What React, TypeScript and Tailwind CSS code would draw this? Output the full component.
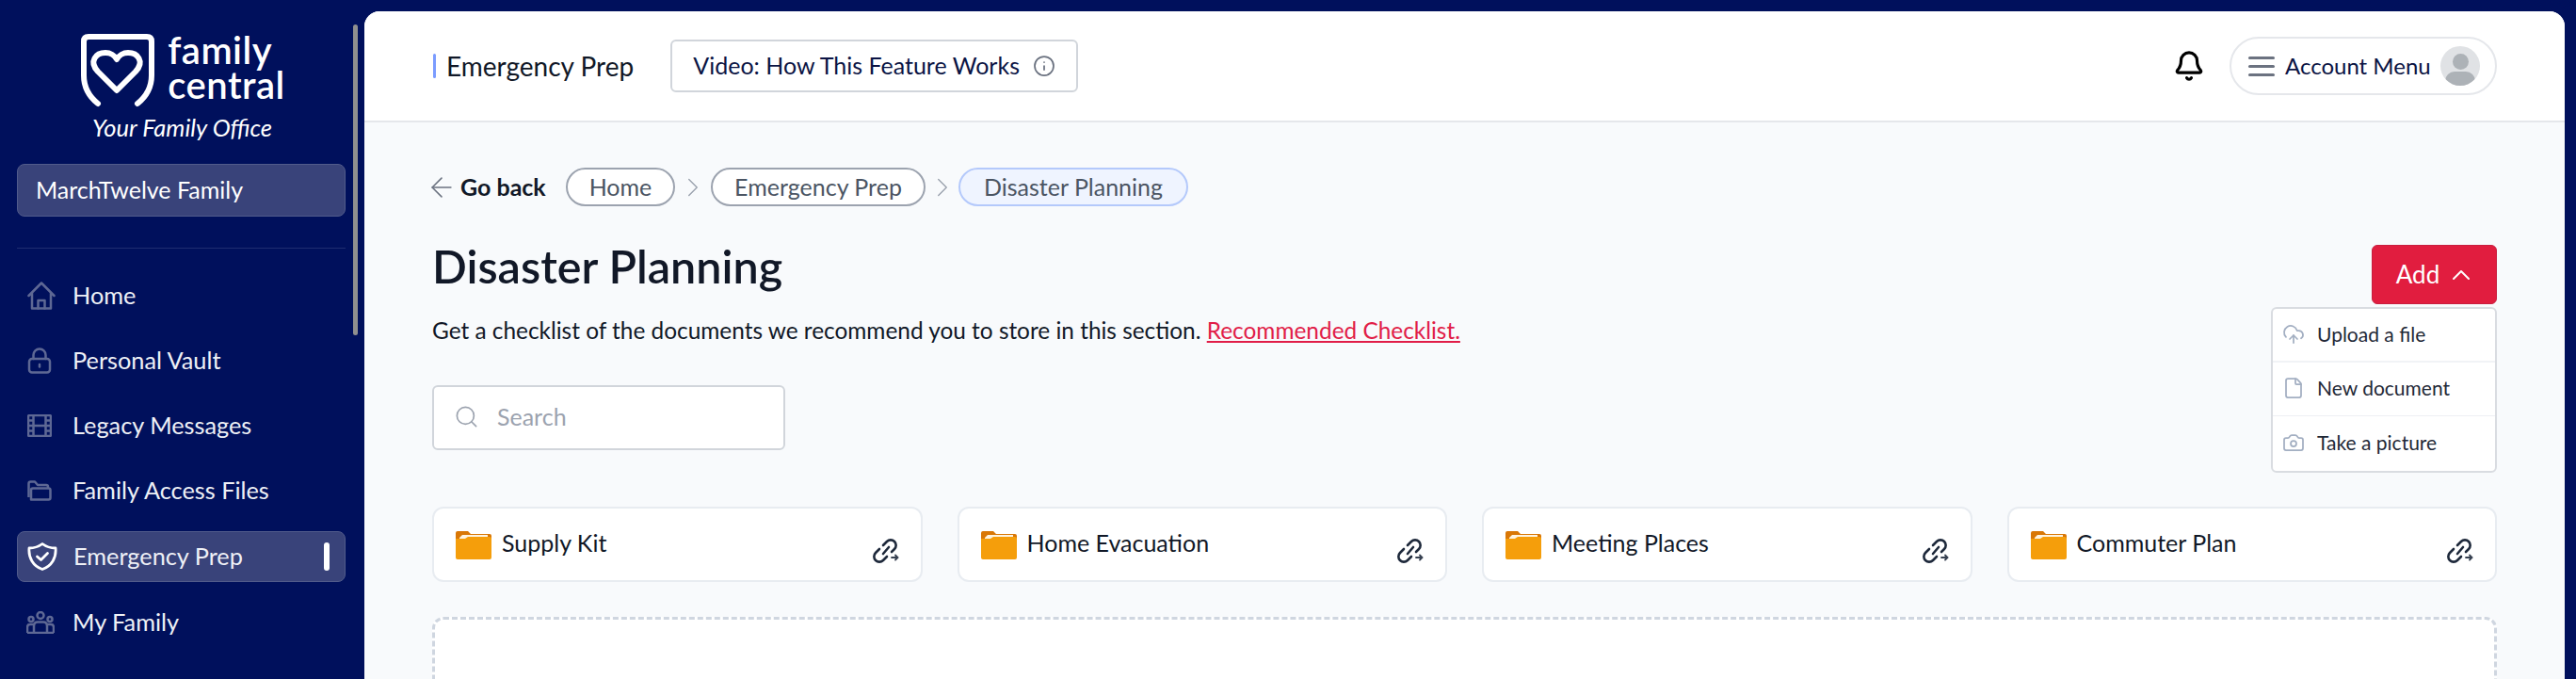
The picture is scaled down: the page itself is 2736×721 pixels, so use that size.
import { ArrowLeft, ChevronRight, ChevronUp, Info, Search, Bell, CloudUpload, File, Camera } from "lucide-react";

const font = "font-['Lato','Noto_Sans',sans-serif]";

function ShieldLogo() {
  return (
    <svg width="78" height="78" viewBox="0 0 78 78" fill="none" stroke="white" strokeWidth="6" strokeLinecap="round" strokeLinejoin="round">
      <path d="M18 74 C8 66 3 56 3 44 V8 Q3 3 8 3 H70 Q75 3 75 8 V44 C75 56 70 66 60 74" />
      <path d="M38 60 L18 40 C8 29 16 20 26 20 C31 20 36 23 38 27 C40 23 45 20 50 20 C60 20 68 29 58 40 Z" />
    </svg>
  );
}

function HomeIcon() {
  return (
    <svg width="30" height="30" viewBox="0 0 30 30" fill="none" stroke="#5e6894" strokeWidth="2.5" strokeLinejoin="round" strokeLinecap="round">
      <path d="M1.5 15 L15 1.5 L28.5 15 M5 12 V28.5 H25 V12" />
      <path d="M11.5 28.5 V20 H18.5 V28.5" />
    </svg>
  );
}

function LockIcon() {
  return (
    <svg width="26" height="28" viewBox="0 0 26 28" fill="none" stroke="#5e6894" strokeWidth="2.5" strokeLinecap="round">
      <rect x="2" y="12" width="22" height="14.5" rx="3" />
      <path d="M6.5 12 V8 a6.5 6.5 0 0 1 13 0 V12" />
      <path d="M13 18 V20.5" />
    </svg>
  );
}

function FilmIcon() {
  return (
    <svg width="26" height="24" viewBox="0 0 26 24" fill="none" stroke="#5e6894" strokeWidth="2.5">
      <rect x="1" y="1" width="24" height="22" rx="1.5" />
      <path d="M6.5 1 V23 M19.5 1 V23 M6.5 12 H19.5 M1 6.5 H6.5 M1 12 H6.5 M1 17.5 H6.5 M19.5 6.5 H25 M19.5 12 H25 M19.5 17.5 H25" />
    </svg>
  );
}

function FolderIcon() {
  return (
    <svg width="26" height="22" viewBox="0 0 26 22" fill="none" stroke="#5e6894" strokeWidth="2.5" strokeLinejoin="round">
      <path d="M1.5 18 V3.5 Q1.5 1.5 3.5 1.5 H8 L11 5 H20 Q22 5 22 7 V8.5" />
      <path d="M4 10.5 Q4 8.5 6 8.5 H22.5 Q24.5 8.5 24.5 10.5 V18.5 Q24.5 20.5 22.5 20.5 H4 Z" />
    </svg>
  );
}

function ShieldCheckIcon() {
  return (
    <svg width="32" height="30" viewBox="0 0 32 30" fill="none" stroke="white" strokeWidth="2.8" strokeLinecap="round" strokeLinejoin="round">
      <path d="M16 1.5 C20 4.5 25 6 30 6 C31 16 26 25 16 28.5 C6 25 1 16 2 6 C7 6 12 4.5 16 1.5 Z" />
      <path d="M10.5 15 L14.5 18.5 L21.5 11.5" />
    </svg>
  );
}

function PeopleIcon() {
  return (
    <svg width="30" height="24" viewBox="0 0 30 24" fill="none" stroke="#5e6894" strokeWidth="2.5" strokeLinejoin="round">
      <circle cx="15" cy="4.5" r="3.5" />
      <circle cx="5" cy="8.5" r="2.5" />
      <circle cx="25" cy="8.5" r="2.5" />
      <path d="M8 23 V16 Q8 11.5 12 11.5 H18 Q22 11.5 22 16 V23" />
      <path d="M1 23 V17 Q1 14 4 14 H8 M29 23 V17 Q29 14 26 14 H22 M1 23 H29" />
    </svg>
  );
}

function FolderFill() {
  return (
    <svg width="38" height="30" viewBox="0 0 38 30">
      <path d="M0 2 Q0 0 2 0 H13 L16 3 H36 Q38 3 38 5 V12 H0 Z" fill="#d97706" />
      <path d="M4 7 L7 4 H34 V9 H4 Z" fill="#fef3e0" />
      <path d="M0 8 H10 L13 6 H36 Q38 6 38 8 V28 Q38 30 36 30 H2 Q0 30 0 28 Z" fill="#f59e0b" />
    </svg>
  );
}

function LinkIcon() {
  return (
    <svg width="28" height="26" viewBox="0 0 28 26" fill="none" stroke="#1e293b" strokeWidth="2.6" strokeLinecap="round">
      <path d="M11 16 L17 9" />
      <path d="M11 7 L15 3 a5.5 5.5 0 0 1 8 8 L20 14" />
      <path d="M15 19 L11 23 a5.5 5.5 0 0 1 -8 -8 L7 11" />
      <path d="M20 20 H26 M24 17.5 L26.5 20 L24 22.5" strokeWidth="1.8" stroke="#374151" />
    </svg>
  );
}

const navItems = [
  { label: "Home", icon: <HomeIcon />, h: "h-[68px]" },
  { label: "Personal Vault", icon: <LockIcon />, h: "h-[69px]" },
  { label: "Legacy Messages", icon: <FilmIcon />, h: "h-[69px]" },
  { label: "Family Access Files", icon: <FolderIcon />, h: "h-[69px]" },
];

const folders = ["Supply Kit", "Home Evacuation", "Meeting Places", "Commuter Plan"];

export default function App() {
  return (
    <div className={`${font} relative flex h-[721px] w-[2736px] overflow-hidden bg-[#00105c]`}>
      {/* Sidebar */}
      <aside className="relative w-[387px] shrink-0 pl-[18px] pr-[20px] text-white">
        <div className="absolute left-[375px] top-[26px] h-[330px] w-[5px] rounded-full bg-[#8f8f8f]" />
        <div className="flex flex-col items-center pt-[36px]">
          <div className="flex items-start gap-[14px] pl-[4px]">
            <ShieldLogo />
            <div className="-mt-[1px] text-[40px] font-semibold leading-[37px] tracking-[0.5px]">
              <div>family</div>
              <div>central</div>
            </div>
          </div>
          <p className="mt-[6px] pl-[2px] text-[25.5px] italic leading-[30px]">Your Family Office</p>
        </div>

        <div className="mt-[24px] flex h-[56px] items-center rounded-lg border border-[#515b8b] bg-[#39437a] px-[19px] text-[25px]">
          MarchTwelve Family
        </div>
        <div className="mt-[33px] h-px bg-[#1f2c70]" />

        <nav className="mt-[16px] flex flex-col text-[25.3px] text-[#eef0f6]">
          {navItems.map((item) => (
            <div key={item.label} className={`flex items-center ${item.h}`}>
              <div className="flex w-[59px] justify-start pl-[11px]">{item.icon}</div>
              <span>{item.label}</span>
            </div>
          ))}
          <div className="mt-[9px] flex h-[54px] items-center rounded-lg border border-[#515b8b] bg-[#39437a]">
            <div className="w-[59px] pl-[10px]">
              <ShieldCheckIcon />
            </div>
            <span className="flex-1">Emergency Prep</span>
            <div className="mr-[16px] h-[30px] w-[6px] rounded-full bg-white" />
          </div>
          <div className="mt-[8px] flex h-[69px] items-center">
            <div className="w-[59px] pl-[10px]">
              <PeopleIcon />
            </div>
            <span>My Family</span>
          </div>
        </nav>
      </aside>

      {/* Main panel */}
      <main className="relative mr-[12px] mt-[12px] flex-1 overflow-hidden rounded-t-[16px] bg-[#f8fafc]">
        <header className="flex h-[118px] items-center justify-between border-b-2 border-[#e5e7eb] bg-white pl-[73px] pr-[72px]">
          <div className="flex items-center">
            <div className="h-[26px] w-[3px] rounded-sm bg-[#7b9cff]" />
            <span className="ml-[11px] text-[28px] text-[#111827]">Emergency Prep</span>
            <div className="ml-[39px] flex h-[56px] w-[433px] items-center justify-center gap-[14px] rounded-md border-2 border-[#d1d5db] text-[25px] text-[#0b1444]">
              Video: How This Feature Works
              <Info size={24} color="#6b7280" strokeWidth={1.75} />
            </div>
          </div>
          <div className="flex items-center">
            <Bell size={34} color="#000000" strokeWidth={2.25} />
            <div className="ml-[26px] flex h-[62px] w-[284px] items-center rounded-full border-2 border-[#e5e7eb] pl-[18px]">
              <div className="flex w-[28px] flex-col gap-[6px]">
                <div className="h-[3px] rounded bg-[#6b7280]" />
                <div className="h-[3px] rounded bg-[#6b7280]" />
                <div className="h-[3px] rounded bg-[#6b7280]" />
              </div>
              <span className="ml-[11px] text-[24px] text-[#0b1444]">Account Menu</span>
              <div className="relative ml-[10px] h-[42px] w-[42px] overflow-hidden rounded-full bg-[#e0e2e5]">
                <div className="absolute left-[13px] top-[8px] h-[17px] w-[17px] rounded-full bg-[#adb2b7]" />
                <div className="absolute left-[5px] top-[27px] h-[20px] w-[32px] rounded-full bg-[#adb2b7]" />
              </div>
            </div>
          </div>
        </header>

        <div className="px-[72px] pt-[48px]">
          {/* Breadcrumb */}
          <div className="flex h-[41px] items-center text-[25px]">
            <ArrowLeft size={34} color="#6b7280" strokeWidth={1.1} className="-ml-[7px]" />
            <span className="ml-[3px] w-[89px] whitespace-nowrap font-bold text-[#111827]">Go back</span>
            <div className="ml-[23px] flex h-[41px] w-[116px] items-center justify-center rounded-full border-2 border-[#9ca3af] bg-white text-[#4b5563]">
              Home
            </div>
            <ChevronRight size={34} strokeWidth={1} color="#9ca3af" className="mx-[2px]" />
            <div className="flex h-[41px] w-[228px] items-center justify-center rounded-full border-2 border-[#9ca3af] bg-white text-[#4b5563]">
              Emergency Prep
            </div>
            <ChevronRight size={34} strokeWidth={1} color="#9ca3af" className="mx-[0.5px]" />
            <div className="flex h-[41px] w-[244px] items-center justify-center rounded-full border-2 border-[#b4c9fb] bg-[#eff4ff] text-[#4b5563]">
              Disaster Planning
            </div>
          </div>

          {/* Title row */}
          <h1 className="mt-[33px] text-[48.5px] font-semibold leading-[60px] text-[#111827]">Disaster Planning</h1>
          <p className="mt-[22px] text-[24.4px] leading-[34px] text-[#111827]">
            Get a checklist of the documents we recommend you to store in this section.{" "}
            <span className="text-[#e11d48] underline">Recommended Checklist.</span>
          </p>

          <div className="mt-[41px] flex h-[69px] w-[375px] items-center gap-[19px] rounded-md border-2 border-[#d1d5db] bg-white pb-[2px] pl-[21px] text-[25px] text-[#9ca3af]">
            <Search size={27} strokeWidth={1.5} />
            Search
          </div>

          <div className="mt-[60px] grid grid-cols-4 gap-[37px]">
            {folders.map((name) => (
              <div key={name} className="flex h-[80px] items-start rounded-xl border-2 border-[#e8ecf1] bg-white pl-[23px] pr-[23px] pt-[24px]">
                <FolderFill />
                <span className="-mt-[3px] ml-[11px] text-[25px] leading-[30px] text-[#111827]">{name}</span>
                <div className="ml-auto mt-[8px]">
                  <LinkIcon />
                </div>
              </div>
            ))}
          </div>

          <div className="mt-[37px] h-[200px] rounded-xl border-[3px] border-dashed border-[#cfd6e0] bg-white" />
        </div>

        {/* Add button with its open menu */}
        <div className="absolute left-[2132px] top-[248px] flex h-[63px] w-[133px] items-center justify-center gap-[7px] rounded-md border border-[#c81e3f] bg-[#e11d3f] pl-[4px] text-[26px] text-white">
          Add
          <ChevronUp size={32} strokeWidth={1.5} />
        </div>
        <div className="absolute left-[2025px] top-[314px] flex w-[240px] flex-col rounded-md border-2 border-[#d9dce1] bg-white text-[21px] text-[#1f2937]">
          <div className="flex h-[57px] items-center gap-[13px] border-b-2 border-[#f1f3f6] pb-[2px] pl-[10px]">
            <CloudUpload size={24} color="#a3afc2" strokeWidth={1.75} />
            Upload a file
          </div>
          <div className="flex h-[57px] items-center gap-[13px] border-b border-[#eef0f3] pb-[2px] pl-[10px]">
            <File size={24} color="#a3afc2" strokeWidth={1.75} />
            New document
          </div>
          <div className="flex h-[58px] items-center gap-[13px] pb-[2px] pl-[10px]">
            <Camera size={24} color="#a3afc2" strokeWidth={1.75} />
            Take a picture
          </div>
        </div>
      </main>
    </div>
  );
}
